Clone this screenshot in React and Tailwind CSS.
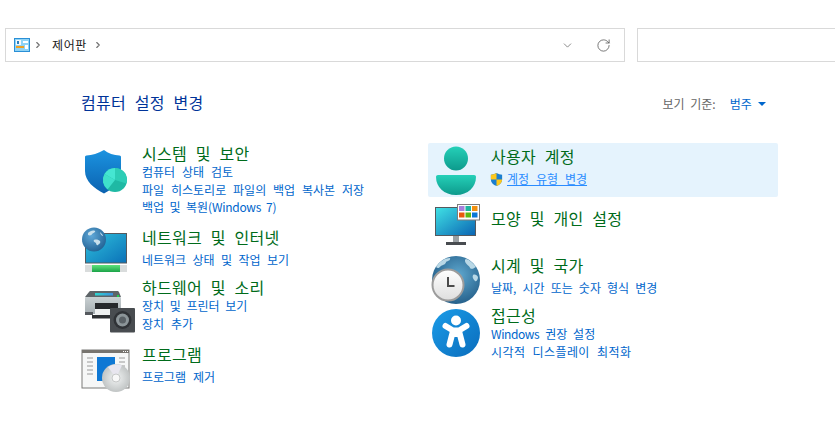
import { ChevronDown, RotateCw, ChevronRight } from "lucide-react";

function ShieldIcon() {
  return (
    <svg className="w-[56px] h-[56px] mr-[6px] shrink-0 overflow-visible" viewBox="80 143 56 56">
      <defs>
        <linearGradient id="shieldFill" x1="0" y1="0" x2="0" y2="1">
          <stop offset="0" stopColor="#1b93e0" />
          <stop offset="1" stopColor="#0b62b0" />
        </linearGradient>
      </defs>
      <path d="M104 150c4 3.500 10 5 15.500 5.500 1 .1 1.500 .8 1.500 1.600v14c0 10-6 17-17 22.500-10-5-19-12.500-19-22.500v-14c0-.8 .6-1.500 1.500-1.600 5.500-.5 11.500-2 17.500-5.500z" fill="url(#shieldFill)" />
      <circle cx="115" cy="180" r="12" fill="#1fb9a4" />
      <path d="M115 180v-12a12 12 0 0 1 11.500 15.500z" fill="#2dcdb6" />
      <path d="M115 180l-10.500-6a12 12 0 0 1 10.500-6z" fill="#45e6d2" />
      <path d="M115 180l-10.500-6a12 12 0 0 0 3 15.500z" fill="#3fe0cb" />
    </svg>
  );
}

function NetworkIcon() {
  return (
    <svg className="w-[56px] h-[56px] mr-[6px] shrink-0 overflow-visible" viewBox="80 227 56 56">
      <defs>
        <linearGradient id="netScreen" x1="0" y1="0" x2="1" y2="1">
          <stop offset="0" stopColor="#2fc0dc" />
          <stop offset="1" stopColor="#0b72b8" />
        </linearGradient>
        <linearGradient id="netBar" x1="0" y1="0" x2="0" y2="1">
          <stop offset="0" stopColor="#5fe27c" />
          <stop offset="1" stopColor="#1ba348" />
        </linearGradient>
        <radialGradient id="netGlobe" cx=".4" cy=".35" r=".75">
          <stop offset="0" stopColor="#5fa8d8" />
          <stop offset="1" stopColor="#1d5c8e" />
        </radialGradient>
      </defs>
      <rect x="85" y="233" width="42" height="30.500" fill="#55595e" />
      <rect x="86" y="234" width="40" height="28.500" fill="url(#netScreen)" />
      <rect x="85" y="265" width="42" height="7" fill="#d9dcdc" />
      <rect x="92" y="265" width="28" height="7" fill="url(#netBar)" />
      <circle cx="94" cy="239.500" r="12" fill="url(#netGlobe)" />
      <path d="M88 233c2-2 5-3 7-2 1 1-2 2-3 3 0 1-2 2-4 1zM94 240c2-1 5 0 6 1 1 2-1 3-2 4-1 1-2-1-2-2-2-1-3-2-2-3zM100 232c1 1 3 3 3 4-1 0-3-2-3-4z" fill="#c8e0ec" />
    </svg>
  );
}

function PrinterIcon() {
  return (
    <svg className="w-[56px] h-[56px] mr-[6px] shrink-0 overflow-visible" viewBox="80 277 56 56">
      <defs>
        <linearGradient id="printTop" x1="0" y1="0" x2="1" y2="0">
          <stop offset="0" stopColor="#2fd8d0" />
          <stop offset="1" stopColor="#3a8ee0" />
        </linearGradient>
        <linearGradient id="printBody" x1="0" y1="0" x2="0" y2="1">
          <stop offset="0" stopColor="#c9d0d2" />
          <stop offset="1" stopColor="#a4acb0" />
        </linearGradient>
      </defs>
      <path d="M89 292c.5-1 1-1 2-1h26c1 0 1.500 0 2 1l2 5H85z" fill="#5e6468" />
      <rect x="95" y="293" width="18" height="2.500" fill="url(#printTop)" />
      <rect x="117" y="295" width="2" height="2" fill="#22d04a" />
      <rect x="85" y="297" width="36" height="17" rx="1" fill="url(#printBody)" />
      <rect x="85" y="312" width="8" height="3" fill="#55595e" />
      <rect x="95" y="303" width="23" height="6" fill="#26282b" />
      <rect x="95" y="309" width="23" height="6" fill="#eef0f0" />
      <rect x="92" y="315" width="22" height="3.500" fill="#2d2f32" />
      <rect x="110" y="308" width="25" height="24.500" rx="1" fill="#484c50" />
      <circle cx="122.500" cy="320" r="9" fill="#2f3236" />
      <circle cx="122.500" cy="320" r="6.500" fill="#8c9599" />
      <circle cx="122.500" cy="320" r="3.500" fill="#5a6166" />
    </svg>
  );
}

function ProgramIcon() {
  return (
    <svg className="w-[56px] h-[56px] mr-[6px] shrink-0 overflow-visible" viewBox="80 344 56 56">
      <defs>
        <radialGradient id="discFill" cx=".5" cy=".5" r=".6">
          <stop offset="0" stopColor="#f2f4f4" />
          <stop offset="1" stopColor="#b7bbbb" />
        </radialGradient>
      </defs>
      <rect x="82" y="350" width="47" height="38" fill="#f6f7f7" stroke="#7b7b78" />
      <rect x="82" y="350" width="47" height="3" fill="#77746f" />
      <rect x="123" y="351" width="1" height="1" fill="#fff" />
      <rect x="125" y="351" width="1" height="1" fill="#fff" />
      <rect x="127" y="351" width="1" height="1" fill="#fff" />
      <rect x="97" y="357" width="18" height="24" fill="#0f78d4" />
      <path d="M87 358h6M87 362h6M87 366h6M87 370h6M87 374h6M119 358h6M119 362h6M119 366h6" stroke="#9a9a9a" strokeWidth="1" />
      <circle cx="116" cy="378" r="14" fill="url(#discFill)" />
      <path d="M116 378l-8-11a14 14 0 0 1 14-1.500z" fill="#e8e6ef" />
      <circle cx="116" cy="378" r="4" fill="#f8f8f8" stroke="#c6c8c8" />
    </svg>
  );
}

function UserIcon() {
  return (
    <svg className="w-[56px] h-[56px] mr-[5px] shrink-0 overflow-visible" viewBox="430 143 56 56">
      <defs>
        <linearGradient id="userFill" x1="0" y1="0" x2="0" y2="1">
          <stop offset="0" stopColor="#25d0b8" />
          <stop offset="1" stopColor="#0d9a8c" />
        </linearGradient>
      </defs>
      <circle cx="456" cy="158.500" r="12" fill="url(#userFill)" />
      <path d="M438 175h36c1.200 0 2 .8 2 2 0 10-8 18-20 18s-20-8-20-18c0-1.200 .8-2 2-2z" fill="url(#userFill)" />
    </svg>
  );
}

function AppearanceIcon() {
  return (
    <svg className="w-[56px] h-[56px] mr-[5px] shrink-0 overflow-visible" viewBox="430 203 56 56">
      <defs>
        <linearGradient id="monScreen" x1="0" y1="0" x2="1" y2="1">
          <stop offset="0" stopColor="#3fe0e4" />
          <stop offset="1" stopColor="#0b66b4" />
        </linearGradient>
      </defs>
      <rect x="435" y="207" width="41" height="29" fill="#55595e" />
      <rect x="436" y="208" width="39" height="27" fill="url(#monScreen)" />
      <rect x="453" y="236" width="6" height="6" fill="#9aa0a4" />
      <rect x="446" y="242" width="20" height="3" fill="#484c50" />
      <rect x="457.500" y="204.500" width="22" height="15.500" fill="#fff" stroke="#7c7c7c" />
      <rect x="459" y="206" width="5.500" height="5" fill="#a77fdc" />
      <rect x="465.500" y="206" width="5.500" height="5" fill="#1fb5a0" />
      <rect x="472" y="206" width="5.500" height="5" fill="#f09010" />
      <rect x="459" y="212.500" width="5.500" height="5" fill="#e8590c" />
      <rect x="465.500" y="212.500" width="5.500" height="5" fill="#5cb814" />
      <rect x="472" y="212.500" width="5.500" height="5" fill="#0a78d6" />
    </svg>
  );
}

function ClockIcon() {
  return (
    <svg className="w-[56px] h-[56px] mr-[5px] shrink-0 overflow-visible" viewBox="430 256 56 56">
      <defs>
        <radialGradient id="clockGlobe" cx=".55" cy=".4" r=".7">
          <stop offset="0" stopColor="#5fa8cf" />
          <stop offset="1" stopColor="#1c5580" />
        </radialGradient>
        <linearGradient id="clockFace" x1="0" y1="0" x2="0" y2="1">
          <stop offset="0" stopColor="#ffffff" />
          <stop offset="1" stopColor="#dedede" />
        </linearGradient>
      </defs>
      <circle cx="456" cy="280" r="24" fill="url(#clockGlobe)" />
      <path d="M436 267c4-6 9-9 14-9 1 2-2 3-4 4 0 2-3 3-5 4-2 2-3 3-5 1zM466 259c4 1 7 4 10 8-2 1-4 3-6 1 0-2-5-4-5-7 0-1 0-2 1-2zM473 275c2-1 4 0 5 2 0 3-2 5-3 4-2-2-3-4-2-6z" fill="#b9d8e6" />
      <circle cx="448" cy="285" r="15.500" fill="url(#clockFace)" stroke="#9c9c9c" strokeWidth="2" />
      <path d="M448 277v9h6.500" fill="none" stroke="#4a4a4a" strokeWidth="2" />
    </svg>
  );
}

function AccessIcon() {
  return (
    <svg className="w-[56px] h-[56px] mr-[5px] shrink-0 overflow-visible" viewBox="430 305 56 56">
      <defs>
        <linearGradient id="accessFill" x1="0" y1="0" x2="1" y2="1">
          <stop offset="0" stopColor="#1b9ce8" />
          <stop offset="1" stopColor="#0a6cbc" />
        </linearGradient>
      </defs>
      <circle cx="456" cy="333" r="24" fill="url(#accessFill)" />
      <circle cx="456" cy="320.500" r="5" fill="#fff" />
      <path d="M445.500 326l7.500 4.500h6l7.500-4.500M453 331l-3.500 13.500M459 331l3.500 13.500" fill="none" stroke="#fff" strokeWidth="6" strokeLinecap="round" strokeLinejoin="round" />
      <rect x="452" y="329" width="8" height="8" fill="#fff" />
    </svg>
  );
}

function CategoryTitle({ children }) {
  return <h2 className="text-[16px] leading-[20px] text-[#006b1a] tracking-[0.25px] [word-spacing:5px]">{children}</h2>;
}

function TaskLink({ className = "[word-spacing:4.2px]", children }) {
  return <a className={`block text-[12px] leading-[17.5px] text-[#0066cc] ${className}`}>{children}</a>;
}

export default function App() {
  return (
    <div className="w-[835px] h-[448px] overflow-hidden bg-white font-['Noto_Sans_CJK_KR','Noto_Sans',sans-serif]">
      <div className="flex pt-[28px] pl-[5px] gap-[12px]">
        <div className="w-[620px] h-[34px] border border-[#d9d9d9] flex items-center pl-[8px] pr-[13px] text-[12px] text-[#1a1a1a]">
          <svg className="w-[16px] h-[14px]" viewBox="0 0 16 14">
            <rect x=".5" y=".5" width="15" height="13" fill="#8fd3f5" stroke="#2a8fd6" />
            <rect x="2" y="2" width="5" height="5" fill="#f4f8fb" />
            <rect x="2" y="8" width="8" height="2" fill="#f0a020" />
            <rect x="9" y="3" width="5" height="2" fill="#ffffff" />
            <rect x="11" y="7" width="3" height="4" fill="#ffffff" />
            <rect x="3" y="3" width="2" height="3" fill="#2a7fc0" />
          </svg>
          <ChevronRight size={10} strokeWidth={2.75} className="ml-[3px] text-[#707070]" />
          <span className="ml-[9px] tracking-[0.6px] leading-[18px]">제어판</span>
          <ChevronRight size={10} strokeWidth={2.75} className="ml-[6px] text-[#707070]" />
          <ChevronDown size={13} strokeWidth={1.25} className="ml-auto text-[#555]" />
          <RotateCw size={15} strokeWidth={1.25} className="ml-[22px] text-[#555]" />
        </div>
        <div className="flex-1 h-[34px] border border-r-0 border-[#d9d9d9]" />
      </div>

      <div className="flex items-center h-[50px] pt-[30px] pl-[81px]">
        <h1 className="text-[16px] leading-[20px] text-[#003399] tracking-[0.25px] [word-spacing:5px]">컴퓨터 설정 변경</h1>
        <span className="ml-[459px] mt-[3px] text-[12px] text-[#666] [word-spacing:3px]">보기 기준:</span>
        <span className="ml-[14px] mt-[3px] text-[12px] text-[#0066cc]">범주</span>
        <span className="ml-[6px] mt-[3px] w-0 h-0 border-l-[4px] border-r-[4px] border-t-[4px] border-l-transparent border-r-transparent border-t-[#0066cc]" />
      </div>

      <div className="flex pt-[31px]">
        <div className="w-[348px] ml-[80px] shrink-0">
          <div className="flex h-[84px]">
            <ShieldIcon />
            <div>
              <CategoryTitle>시스템 및 보안</CategoryTitle>
              <TaskLink>컴퓨터 상태 검토</TaskLink>
              <TaskLink>파일 히스토리로 파일의 백업 복사본 저장</TaskLink>
              <TaskLink className="[word-spacing:2.7px]">백업 및 복원(<span className="tracking-[-0.3px]">Windows 7</span>)</TaskLink>
            </div>
          </div>
          <div className="flex h-[50px]">
            <NetworkIcon />
            <div>
              <CategoryTitle>네트워크 및 인터넷</CategoryTitle>
              <div className="mt-[4px]">
                <TaskLink className="[word-spacing:3.7px]">네트워크 상태 및 작업 보기</TaskLink>
              </div>
            </div>
          </div>
          <div className="flex h-[67px]">
            <PrinterIcon />
            <div>
              <CategoryTitle>하드웨어 및 소리</CategoryTitle>
              <TaskLink className="[word-spacing:3px]">장치 및 프린터 보기</TaskLink>
              <TaskLink>장치 추가</TaskLink>
            </div>
          </div>
          <div className="flex">
            <ProgramIcon />
            <div>
              <CategoryTitle>프로그램</CategoryTitle>
              <div className="mt-[4px]">
                <TaskLink>프로그램 제거</TaskLink>
              </div>
            </div>
          </div>
        </div>

        <div className="w-[350px]">
          <div className="flex h-[54px] pl-[2px] bg-[#e5f3fd] rounded-[2px]">
            <UserIcon />
            <div>
              <div className="pt-[3px]">
                <CategoryTitle>사용자 계정</CategoryTitle>
              </div>
              <div className="flex items-center mt-[5px] -ml-[2px]">
                <svg className="w-[15px] h-[15px]" viewBox="0 0 16 16">
                  <path d="M8 1c2 1.200 4 1.800 6 2v5c0 3.500-2.500 5.800-6 7-3.500-1.200-6-3.500-6-7V3c2-.2 4-.8 6-2z" fill="#1a7fd0" />
                  <path d="M8 1v7H2V3c2-.2 4-.8 6-2zM8 8h6c0 3.500-2.500 5.800-6 7z" fill="#ffc81a" />
                </svg>
                <a className="ml-[3px] text-[12px] leading-[16px] text-[#2a8cff] underline [word-spacing:4.2px]">계정 유형 변경</a>
              </div>
            </div>
          </div>
          <div className="flex h-[53px] mt-[6px] pl-[2px]">
            <AppearanceIcon />
            <div className="pt-[5px]">
              <CategoryTitle>모양 및 개인 설정</CategoryTitle>
            </div>
          </div>
          <div className="flex h-[49px] pl-[2px]">
            <ClockIcon />
            <div className="-mt-[1px]">
              <CategoryTitle>시계 및 국가</CategoryTitle>
              <div className="mt-[4px]">
                <TaskLink className="[word-spacing:3.4px]">날짜, 시간 또는 숫자 형식 변경</TaskLink>
              </div>
            </div>
          </div>
          <div className="flex pl-[2px]">
            <AccessIcon />
            <div>
              <CategoryTitle>접근성</CategoryTitle>
              <TaskLink className="[word-spacing:3.2px]"><span className="tracking-[-0.4px]">Windows</span> 권장 설정</TaskLink>
              <TaskLink className="tracking-[0.4px] [word-spacing:4.2px]">시각적 디스플레이 최적화</TaskLink>
            </div>
          </div>
        </div>
      </div>
    </div>
  );
}
